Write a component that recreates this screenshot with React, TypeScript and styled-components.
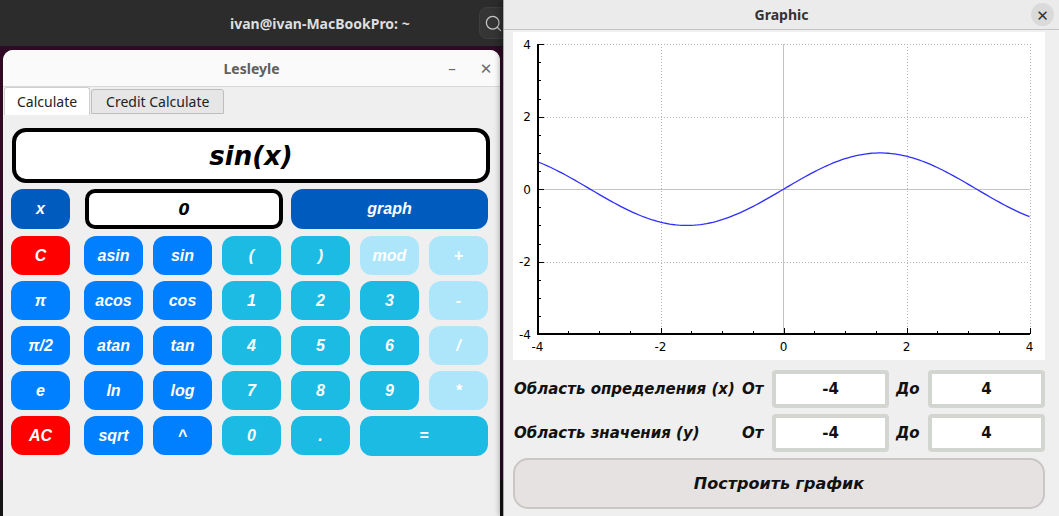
import React from 'react';
import styled, { createGlobalStyle } from 'styled-components';
import { Search } from 'lucide-react';

const GlobalStyle = createGlobalStyle`
  html, body {
    margin: 0;
    padding: 0;
    background: #1e1e1e;
    overflow: hidden;
  }
  #root {
    width: 1059px;
    height: 516px;
  }
`;

const Desktop = styled.div`
  display: flex;
  width: 1059px;
  height: 516px;
  overflow: hidden;
`;

const TerminalArea = styled.div`
  width: 503px;
  flex-shrink: 0;
  display: flex;
  flex-direction: column;
  overflow: hidden;
`;

const TerminalHeader = styled.div`
  height: 46px;
  flex-shrink: 0;
  background: #2c2c2c;
  display: flex;
  align-items: center;
  padding-left: 230px;
  font-family: 'Noto Sans', 'DejaVu Sans', sans-serif;
  font-weight: 700;
  font-size: 14px;
  color: #dedede;
`;

const SearchButton = styled.div`
  margin-left: auto;
  margin-right: -12px;
  width: 36px;
  height: 32px;
  border-radius: 8px;
  background: #353535;
  border: 1px solid #3e3e3e;
  display: flex;
  align-items: center;
  padding-left: 4px;
  box-sizing: border-box;
  color: #c8c8c8;
`;

const TerminalBody = styled.div`
  flex: 1;
  min-height: 0;
  display: flex;
  padding: 4px 0 0 3px;
  background: linear-gradient(to bottom, #2f0a24 0, #2f0a24 434px, #141414 434px);
`;

const CalcWindow = styled.div`
  width: 497px;
  background: #efefef;
  border-radius: 10px 10px 0 0;
  display: flex;
  flex-direction: column;
  overflow: hidden;
`;

const CalcTitleBar = styled.div`
  height: 36px;
  flex-shrink: 0;
  background: #fafafa;
  border-bottom: 1px solid #d9d9d9;
  display: grid;
  grid-template-columns: 1fr auto 1fr;
  align-items: center;
  font-family: 'Noto Sans', 'DejaVu Sans', sans-serif;
`;

const WindowTitle = styled.span<{ $active?: boolean }>`
  grid-column: 2;
  font-weight: 700;
  font-size: 14px;
  color: ${({ $active }) => ($active ? '#333' : '#5f5f5f')};
`;

const TitleControls = styled.div`
  justify-self: end;
  display: flex;
  gap: 14px;
  padding-right: 4px;
`;

const TitleControl = styled.span`
  width: 20px;
  text-align: center;
  font-size: 15px;
  color: #6a6a6a;
`;

const TabBar = styled.div`
  height: 29px;
  flex-shrink: 0;
  display: flex;
  align-items: flex-start;
  padding: 0 0 0 1px;
  font-family: 'Noto Sans', 'DejaVu Sans', sans-serif;
  font-size: 14px;
  color: #222;
`;

const Tab = styled.div<{ $selected?: boolean }>`
  box-sizing: border-box;
  height: ${({ $selected }) => ($selected ? '28px' : '25px')};
  margin-top: ${({ $selected }) => ($selected ? '0' : '2px')};
  padding: 0 ${({ $selected }) => ($selected ? '12px' : '14px')};
  display: flex;
  align-items: center;
  background: ${({ $selected }) => ($selected ? '#ffffff' : '#e6e6e6')};
  border: 1px solid ${({ $selected }) => ($selected ? '#cfcfcf' : '#bdbdbd')};
  border-bottom: ${({ $selected }) => ($selected ? 'none' : '1px solid #bdbdbd')};
  border-radius: 3px 3px 0 0;
  margin-right: ${({ $selected }) => ($selected ? '1px' : '0')};
`;

const CalcPane = styled.div`
  padding: 12px 0 0 8px;
  display: flex;
  flex-direction: column;
`;

const Display = styled.div`
  box-sizing: border-box;
  margin-left: 1px;
  width: 478px;
  height: 55px;
  border: 4px solid #000;
  border-radius: 14px;
  background: #fff;
  display: flex;
  align-items: center;
  justify-content: center;
  font-family: 'DejaVu Sans', sans-serif;
  font-weight: 700;
  font-style: italic;
  font-size: 26px;
  color: #000;
`;

const Keypad = styled.div`
  margin-top: 6px;
  display: grid;
  grid-template-columns: 73px repeat(6, 69px);
  grid-template-rows: 41px repeat(5, 39px);
  row-gap: 6px;
`;

type KeyKind = 'red' | 'dark' | 'blue' | 'cyan' | 'light';

const keyColors: Record<KeyKind, string> = {
  red: '#ff0000',
  dark: '#005bbf',
  blue: '#007fff',
  cyan: '#1cbbe4',
  light: '#ade6fb',
};

const Key = styled.button<{ $kind: KeyKind; $span?: number; $tall?: boolean }>`
  grid-column: span ${({ $span }) => $span || 1};
  width: ${({ $span }) => 59 + 69 * (($span || 1) - 1)}px;
  height: ${({ $tall }) => ($tall ? '40px' : '39px')};
  padding: 0;
  border: none;
  border-radius: 12px;
  background: ${({ $kind }) => keyColors[$kind]};
  color: #fff;
  font-family: 'Liberation Sans', Arial, sans-serif;
  font-weight: 700;
  font-style: italic;
  font-size: 16px;
`;

const ValueField = styled.div`
  grid-column: span 3;
  box-sizing: border-box;
  margin-left: 1px;
  width: 198px;
  height: 40px;
  border: 4px solid #000;
  border-radius: 10px;
  background: #fff;
  display: flex;
  align-items: center;
  justify-content: center;
  font-family: 'DejaVu Sans', sans-serif;
  font-weight: 700;
  font-style: italic;
  font-size: 16px;
`;

const GraphicWindow = styled.div`
  position: relative;
  z-index: 1;
  flex: 1;
  display: flex;
  flex-direction: column;
  background: #efefef;
  border-left: 1px solid #a9a9a9;
  box-shadow: -3px 0 6px rgba(0, 0, 0, 0.35);
`;

const GraphicTitleBar = styled.div`
  height: 29px;
  flex-shrink: 0;
  background: #ebebeb;
  border-bottom: 1px solid #c4c4c4;
  display: grid;
  grid-template-columns: 1fr auto 1fr;
  align-items: center;
  font-family: 'Noto Sans', 'DejaVu Sans', sans-serif;
`;

const CloseCircle = styled.div`
  justify-self: end;
  margin-right: 5px;
  width: 23px;
  height: 23px;
  border-radius: 50%;
  background: #dadada;
  display: flex;
  align-items: center;
  justify-content: center;
  font-size: 15px;
  color: #333;
`;

const GraphicBody = styled.div`
  padding: 2px 14px 0 9px;
  display: flex;
  flex-direction: column;
`;

const PlotBox = styled.div`
  height: 328px;
  background: #fff;
  flex-shrink: 0;
`;

const RangeForm = styled.div`
  margin-top: 10px;
  display: grid;
  grid-template-columns: 228px 31px 117px 39px 117px;
  grid-auto-rows: 38px;
  row-gap: 6px;
  align-items: center;
  font-family: 'DejaVu Sans', sans-serif;
  font-weight: 700;
  font-size: 15px;
  color: #111;
`;

const RangeLabel = styled.span<{ $pad?: number }>`
  font-style: italic;
  padding-left: ${({ $pad }) => $pad || 1}px;
  white-space: nowrap;
`;

const RangeInput = styled.div`
  box-sizing: border-box;
  height: 38px;
  border: 4px solid #d3d5d0;
  border-radius: 4px;
  background: #fff;
  display: flex;
  align-items: center;
  justify-content: center;
`;

const PlotButton = styled.button`
  margin-top: 6px;
  height: 51px;
  border: 2px solid #cbc6c6;
  border-radius: 15px;
  background: #e6e2e2;
  font-family: 'DejaVu Sans', sans-serif;
  font-weight: 700;
  font-style: italic;
  font-size: 16px;
  color: #111;
`;

const keyRows: [string, KeyKind, number?][][] = [
  [['C', 'red'], ['asin', 'blue'], ['sin', 'blue'], ['(', 'cyan'], [')', 'cyan'], ['mod', 'light'], ['+', 'light']],
  [['π', 'blue'], ['acos', 'blue'], ['cos', 'blue'], ['1', 'cyan'], ['2', 'cyan'], ['3', 'cyan'], ['-', 'light']],
  [['π/2', 'blue'], ['atan', 'blue'], ['tan', 'blue'], ['4', 'cyan'], ['5', 'cyan'], ['6', 'cyan'], ['/', 'light']],
  [['e', 'blue'], ['ln', 'blue'], ['log', 'blue'], ['7', 'cyan'], ['8', 'cyan'], ['9', 'cyan'], ['*', 'light']],
  [['AC', 'red'], ['sqrt', 'blue'], ['^', 'blue'], ['0', 'cyan'], ['.', 'cyan'], ['=', 'cyan', 2]],
];

// plot geometry, in svg coordinates of the white box
const px = (x: number) => 24.5 + (x + 4) * 61.5;
const py = (y: number) => 157.2 - y * 36.25;

const Plot: React.FC = () => {
  const halves = Array.from({ length: 17 }, (_, i) => -4 + i * 0.5);
  const curve = Array.from({ length: 161 }, (_, i) => {
    const x = -4 + i * 0.05;
    return `${px(x).toFixed(2)},${py(Math.sin(x)).toFixed(2)}`;
  }).join(' ');
  const dotted = { stroke: '#b5b5b5', strokeWidth: 1, strokeDasharray: '1 2' };
  return (
    <svg width="531" height="328" viewBox="0 0 531 328">
      {[-2, 2, 4].map((v) => (
        <line key={`gx${v}`} x1={Math.round(px(v)) + 0.5} x2={Math.round(px(v)) + 0.5} y1={12} y2={302} {...dotted} />
      ))}
      {[4, 2, -2].map((v) => (
        <line key={`gy${v}`} x1={25} x2={517} y1={Math.round(py(v)) + 0.5} y2={Math.round(py(v)) + 0.5} {...dotted} />
      ))}
      <line x1={270.5} x2={270.5} y1={12} y2={302} stroke="#c3c3c3" strokeWidth={1} />
      <line x1={25} x2={517} y1={157.5} y2={157.5} stroke="#c3c3c3" strokeWidth={1} />
      <polyline points={curve} fill="none" stroke="#2f2fff" strokeWidth={1.3} />
      <line x1={25} x2={25} y1={12} y2={303} stroke="#000" strokeWidth={2} />
      <line x1={24} x2={517} y1={302} y2={302} stroke="#000" strokeWidth={2} />
      {halves.map((v) => {
        const major = v % 2 === 0;
        const y = Math.round(py(v)) + 0.5;
        return <line key={`ty${v}`} x1={25} x2={major ? 31 : 28} y1={y} y2={y} stroke="#000" strokeWidth={1} />;
      })}
      {halves.map((v) => {
        const major = v % 2 === 0;
        const x = Math.round(px(v)) + 0.5;
        return <line key={`tx${v}`} x1={x} x2={x} y1={302} y2={major ? 296 : 299} stroke="#000" strokeWidth={1} />;
      })}
      <g fontFamily="'DejaVu Sans', sans-serif" fontSize="12" fill="#000">
        {[4, 2, 0, -2, -4].map((v) => (
          <text key={`ly${v}`} x={18} y={py(v) + 4.5} textAnchor="end">
            {v}
          </text>
        ))}
        {[-4, -2, 0, 2, 4].map((v) => (
          <text key={`lx${v}`} x={px(v)} y={318.5} textAnchor="middle">
            {v}
          </text>
        ))}
      </g>
    </svg>
  );
};

const App: React.FC = () => (
  <>
    <GlobalStyle />
    <Desktop>
      <TerminalArea>
        <TerminalHeader>
          ivan@ivan-MacBookPro: ~
          <SearchButton>
            <Search size={19} strokeWidth={1.6} />
          </SearchButton>
        </TerminalHeader>
        <TerminalBody>
          <CalcWindow>
            <CalcTitleBar>
              <WindowTitle>Lesleyle</WindowTitle>
              <TitleControls>
                <TitleControl>–</TitleControl>
                <TitleControl>✕</TitleControl>
              </TitleControls>
            </CalcTitleBar>
            <TabBar>
              <Tab $selected>Calculate</Tab>
              <Tab>Credit Calculate</Tab>
            </TabBar>
            <CalcPane>
              <Display>sin(x)</Display>
              <Keypad>
                <Key $kind="dark" $tall>
                  x
                </Key>
                <ValueField>0</ValueField>
                <Key $kind="dark" $span={3} $tall>
                  graph
                </Key>
                {keyRows.map((row) =>
                  row.map(([label, kind, span]) => (
                    <Key key={label} $kind={kind} $span={span} $tall={span === 2}>
                      {label}
                    </Key>
                  )),
                )}
              </Keypad>
            </CalcPane>
          </CalcWindow>
        </TerminalBody>
      </TerminalArea>

      <GraphicWindow>
        <GraphicTitleBar>
          <WindowTitle $active>Graphic</WindowTitle>
          <CloseCircle>✕</CloseCircle>
        </GraphicTitleBar>
        <GraphicBody>
          <PlotBox>
            <Plot />
          </PlotBox>
          <RangeForm>
            <RangeLabel>Область определения (x)</RangeLabel>
            <RangeLabel $pad={0}>От</RangeLabel>
            <RangeInput>-4</RangeInput>
            <RangeLabel $pad={7}>До</RangeLabel>
            <RangeInput>4</RangeInput>
            <RangeLabel>Область значения (у)</RangeLabel>
            <RangeLabel $pad={0}>От</RangeLabel>
            <RangeInput>-4</RangeInput>
            <RangeLabel $pad={7}>До</RangeLabel>
            <RangeInput>4</RangeInput>
          </RangeForm>
          <PlotButton>Построить график</PlotButton>
        </GraphicBody>
      </GraphicWindow>
    </Desktop>
  </>
);

export default App;
